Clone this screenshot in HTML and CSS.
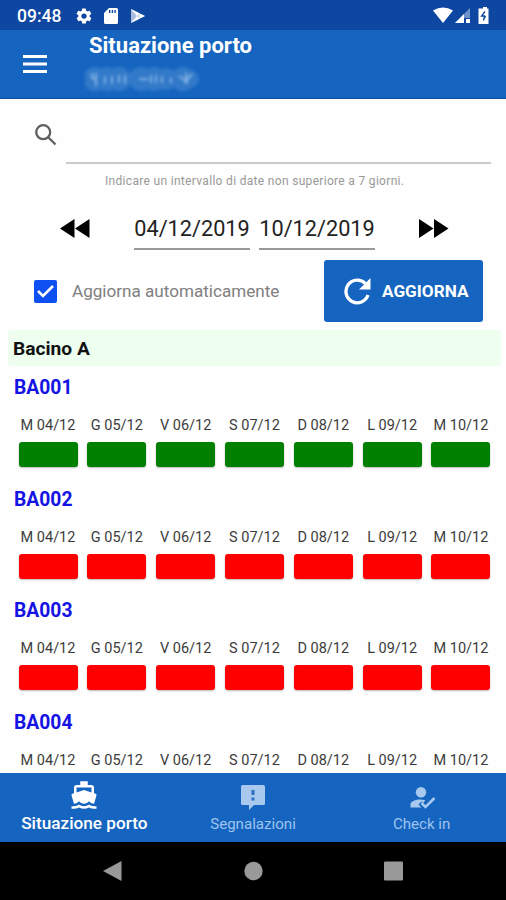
FILE: index.html
```html
<!DOCTYPE html>
<html lang="it">
<head>
<meta charset="utf-8">
<title>Situazione porto</title>
<link rel="stylesheet" href="styles.css">
</head>
<body>
<div class="phone">
  <div class="status">
    <span class="clock">09:48</span>
    <svg class="st-gear" width="18" height="18" viewBox="0 0 24 24" fill="currentColor"><path d="M19.4 13c0-.3.1-.6.1-1s0-.7-.1-1l2.1-1.600c.2-.2.200-.4.100-.6l-2-3.500c-.1-.2-.4-.3-.6-.2l-2.500 1c-.5-.4-1.100-.7-1.700-1l-.4-2.600c0-.2-.2-.4-.5-.4h-4c-.2 0-.5.200-.5.400l-.4 2.600c-.6.300-1.200.6-1.700 1l-2.500-1c-.2-.1-.5 0-.6.200l-2 3.500c-.1.200-.1.500.1.600L4.500 11c0 .3-.1.600-.1 1s0 .7.100 1l-2.100 1.600c-.2.200-.2.400-.1.600l2 3.500c.1.200.4.300.6.200l2.500-1c.5.400 1.100.7 1.700 1l.4 2.600c0 .2.200.4.500.4h4c.2 0 .5-.2.500-.4l.4-2.600c.6-.3 1.200-.6 1.700-1l2.500 1c.2.100.5 0 .6-.2l2-3.500c.1-.2.100-.5-.1-.6zM12 15.500a3.500 3.500 0 1 1 0-7 3.500 3.500 0 0 1 0 7z"/></svg>
    <svg class="st-sd" width="14" height="16" viewBox="0 0 14 16" fill="currentColor"><path fill-rule="evenodd" d="M5 0h7.500Q14 0 14 1.500v13q0 1.500-1.500 1.500h-11Q0 16 0 14.500V5zM5 2v3h1.400V2zM7.700 2v3h1.400V2zM10.400 2v3h1.400V2z"/></svg>
    <svg class="st-play" width="16" height="16" viewBox="0 0 16 16"><path d="M1 1v14L15 8z" fill="#a9bfe2"/><path d="M1 1l9 4.500L7 8zM10.500 5.800L15 8l-4.500 2.200L8.300 8zM1 15l9-4.500L7 8z" fill="#fff"/></svg>
    <svg class="st-right" width="58" height="18" viewBox="0 0 58 18"><path d="M0 3.500Q10-2.500 20 3.500L10 16z" fill="#fff"/><path d="M37 1v15H22z" fill="#6f91cc"/><path d="M31 7v9h-9z" fill="#fff"/><path d="M31 11h7v6h-7z" fill="#0d47a1"/><path d="M33 12h4v4h-4z" fill="#fff"/><path d="M48 1.500h2V0h4v1.500h1.500V17h-10V1.500z" fill="#fff"/><path d="M52 4.500L48.500 9h3l-1 4.500M52.500 9l-2 4" fill="none" stroke="#0d47a1" stroke-width="1.300"/></svg>
  </div>
  <header class="appbar">
    <svg class="menu" width="24" height="18" viewBox="0 0 24 18" fill="currentColor"><path d="M0 0h24v3H0zM0 7.500h24v3H0zM0 15h24v3H0z"/></svg>
    <div class="titles">
      <h1>Situazione porto</h1>
      <svg class="redacted" width="118" height="26" viewBox="0 0 118 26"><g fill="#78a9df" opacity=".3"><circle cx="10" cy="13" r="12"/><circle cx="22" cy="13" r="12"/><circle cx="34" cy="13" r="12"/><circle cx="56" cy="13" r="12"/><circle cx="69" cy="13" r="12"/><circle cx="81" cy="13" r="11"/><circle cx="98" cy="13" r="12"/><circle cx="105" cy="13" r="9"/></g><path d="M7 7v5l4 2M11 7v13M20 10v8M27 10v8M34 9v8M40 9v9M54 13h9M66 9v8M71 9v8M77 10v7M86 12v5M94 10l9 7M101 7v11M107 8l-7 8" fill="none" stroke="#afd2f6" stroke-width="2" opacity=".65"/></svg>
    </div>
  </header>
  <main>
    <div class="search">
      <svg width="22" height="22" viewBox="0 0 22 22" fill="none" stroke="#606060" stroke-width="2.300"><circle cx="8.200" cy="8.200" r="7"/><path d="M13.200 13.200l7.300 7.300"/></svg>
      <div class="field"></div>
    </div>
    <p class="hint"><svg width="299" height="16"><text x="0" y="12" textLength="299">Indicare un intervallo di date non superiore a 7 giorni.</text></svg></p>
    <div class="dates">
      <svg class="rew" width="30" height="19" viewBox="0 0 30 19"><path d="M14.500 0v19L0 9.500zM29.500 0v19L15 9.500z"/></svg>
      <span class="date">04/12/2019</span><span class="date">10/12/2019</span>
      <svg class="fwd" width="30" height="19" viewBox="0 0 30 19"><path d="M0 0v19l14.500-9.500zM15 0v19l14.500-9.500z"/></svg>
    </div>
    <div class="refresh">
      <svg class="check" width="23" height="23" viewBox="0 0 23 23"><rect width="23" height="23" rx="2" fill="#0d4ff0"/><path d="M4 11l5 5L19 6" fill="none" stroke="#fff" stroke-width="2.600"/></svg>
      <span class="auto">Aggiorna automaticamente</span>
      <div class="button"><svg width="28" height="28" viewBox="0 0 28 28"><path d="M22.500 6.700A11.300 11.300 0 1 0 25 18" fill="none" stroke="#fff" stroke-width="3.300"/><path d="M27.500 1v11.500H16z" fill="#fff"/></svg><span>AGGIORNA</span></div>
    </div>
    <h2>Bacino A</h2>
    <div id="berths"></div>
  </main>
  <nav class="tabs">
    <div class="tab active"><svg width="30" height="30" viewBox="0 0 24 24" fill="currentColor"><path d="M20 21c-1.390 0-2.780-.47-4-1.320-2.440 1.710-5.560 1.710-8 0C6.780 20.530 5.390 21 4 21H2v2h2c1.380 0 2.740-.35 4-.99 2.520 1.290 5.480 1.290 8 0 1.260.65 2.620.99 4 .99h2v-2h-2zM3.950 19H4c1.600 0 3.020-.88 4-2 .98 1.120 2.400 2 4 2s3.020-.88 4-2c.98 1.120 2.400 2 4 2h.05l1.890-6.680c.08-.26.06-.54-.06-.78s-.34-.42-.6-.5L20 10.620V6c0-1.100-.9-2-2-2h-3V1H9v3H6c-1.100 0-2 .9-2 2v4.620l-1.290.42c-.26.08-.48.26-.6.500s-.15.520-.06.780L3.950 19zM6 6h12v3.970L12 8 6 9.970V6z"/></svg><span>Situazione porto</span></div>
    <div class="tab"><svg width="28" height="28" viewBox="0 0 28 28"><path d="M3.500 2h21q1.500 0 1.500 1.500v17q0 1.500-1.500 1.500H15l-5 5v-5H3.500Q2 22 2 20.500v-17Q2 2 3.500 2z" fill="#a9c8ee"/><path d="M12.500 7h3v5h-3zM12.500 14.500h3v3h-3z" fill="#2d6fc2"/></svg><span>Segnalazioni</span></div>
    <div class="tab"><svg width="28" height="28" viewBox="0 0 28 28" fill="#a9c8ee"><circle cx="13" cy="9.300" r="5.200"/><path d="M2.500 24.500v-3C2.500 18 8 16.500 12 16.500q3 0 5.500 1L15 20l-1.500-1.500-3 3 3 3z"/><path d="M13.500 20l4 4 9-9" fill="none" stroke="#a9c8ee" stroke-width="2.500"/></svg><span>Check in</span></div>
  </nav>
  <div class="system">
    <svg width="20" height="22" viewBox="0 0 20 22"><path d="M18.500 1v20L0 11z"/></svg>
    <svg width="20" height="20" viewBox="0 0 20 20"><circle cx="10.500" cy="10" r="9.200"/></svg>
    <svg width="20" height="20" viewBox="0 0 20 20"><rect x="1" y=".5" width="19" height="19" rx="1"/></svg>
  </div>
</div>
<script src="berths.js"></script>
</body>
</html>
```
FILE: styles.css
```css
* { box-sizing: border-box; }
body { margin: 0; font-family: Roboto, "Liberation Sans", sans-serif; background: #fefefe; }
svg { display: block; flex: none; }
.phone { width: 506px; height: 900px; display: flex; flex-direction: column; overflow: hidden; }
.status { height: 30px; background: #0d47a1; color: #fff; display: flex; align-items: center; padding: 1px 15px 0 17px; flex: none; }
.clock { width: 58px; font-size: 17.500px; font-weight: 500; white-space: nowrap; }
.st-gear { margin-right: 11px; }
.st-sd { margin-right: 12px; }
.st-right { margin-left: auto; }
.appbar { height: 69px; flex: none; background: #1565c0; border-bottom: 1px solid #0f4ca6; color: #fff; display: flex; padding-left: 23px; }
.menu { margin-top: 25px; width: 24px; }
.titles { margin-left: 38px; }
h1 { margin: 3px 0 0 4px; font-size: 22px; line-height: 26px; font-weight: 700; white-space: nowrap; }
.redacted { filter: blur(1.500px); margin-top: 7px; }
main { flex: 1; min-height: 0; overflow: hidden; }
.search { display: flex; padding: 25px 15px 0 35px; height: 65px; }
.field { margin-left: 9px; flex: 1; border-bottom: 2px solid #cacaca; }
.hint { margin: 9px 0 0 105px; height: 16px; font-size: 12px; }
.hint text { fill: #999; }
.dates { display: flex; margin-top: 20px; padding-left: 60px; height: 42px; }
.date { width: 116px; height: 41px; border-bottom: 2px solid #999; font-size: 21.700px; line-height: 39px; text-align: center; color: #222; white-space: nowrap; }
.rew { margin: 10px 44px 0 0; }
.date + .date { margin-left: 9px; }
.fwd { margin: 10px 0 0 44px; }
.refresh { display: flex; align-items: center; height: 62px; margin-top: 9px; padding-left: 34px; }
.auto { width: 252px; margin-left: 15px; font-size: 17.100px; color: #808080; white-space: nowrap; }
.button { width: 159px; height: 62px; border-radius: 3px; background: #1565c0; color: #fff; display: flex; align-items: center; padding-left: 19px; font-size: 17.200px; font-weight: 700; }
.button span { margin-left: 11px; }
h2 { margin: 8px 5px 0 8px; height: 36px; padding-left: 5px; border-radius: 3px; background: #eefff0; font-size: 19.200px; line-height: 38px; font-weight: 700; color: #111; }
.berth { height: 111.500px; padding: 9px 15px 0 18px; }
.berth h3 { margin: 0 0 0 -4px; font-size: 19.300px; line-height: 26px; font-weight: 700; color: #1512e4; }
.days { display: flex; justify-content: space-between; margin-top: 15px; }
.day { width: 60px; color: #3c3c3c; font-size: 14.500px; line-height: 20px; text-align: center; white-space: nowrap; }
.slot { width: 59px; height: 25px; margin: 6px 0 0 .5px; border-radius: 3px; background: red; box-shadow: 0 1px 2px #0004; }
.free .slot { background: #008000; }
.tabs { height: 69px; flex: none; display: grid; grid-template-columns: repeat(3, 1fr); background: #1565c0; }
.tab { color: #9fc3ed; display: flex; flex-direction: column; align-items: center; padding-top: 10px; font-size: 15.100px; }
.tab span { line-height: 20px; margin-top: 3px; white-space: nowrap; }
.active { color: #fff; padding-top: 7px; font-size: 17.200px; font-weight: 500; }
.system { height: 58px; flex: none; background: #000; display: flex; justify-content: space-between; align-items: center; padding: 0 103px; fill: #999; }
```
FILE: berths.js
```js
const days = ["M 04/12", "G 05/12", "V 06/12", "S 07/12", "D 08/12", "L 09/12", "M 10/12"];
const berths = [["BA001", "free"], ["BA002", "busy"], ["BA003", "busy"], ["BA004", "busy"]];
document.getElementById("berths").innerHTML = berths.map(([name, state]) =>
  `<section class="berth ${state}"><h3>${name}</h3><div class="days">${days.map(day =>
    `<div class="day">${day}<div class="slot"></div></div>`).join("")}</div></section>`).join("");
```
